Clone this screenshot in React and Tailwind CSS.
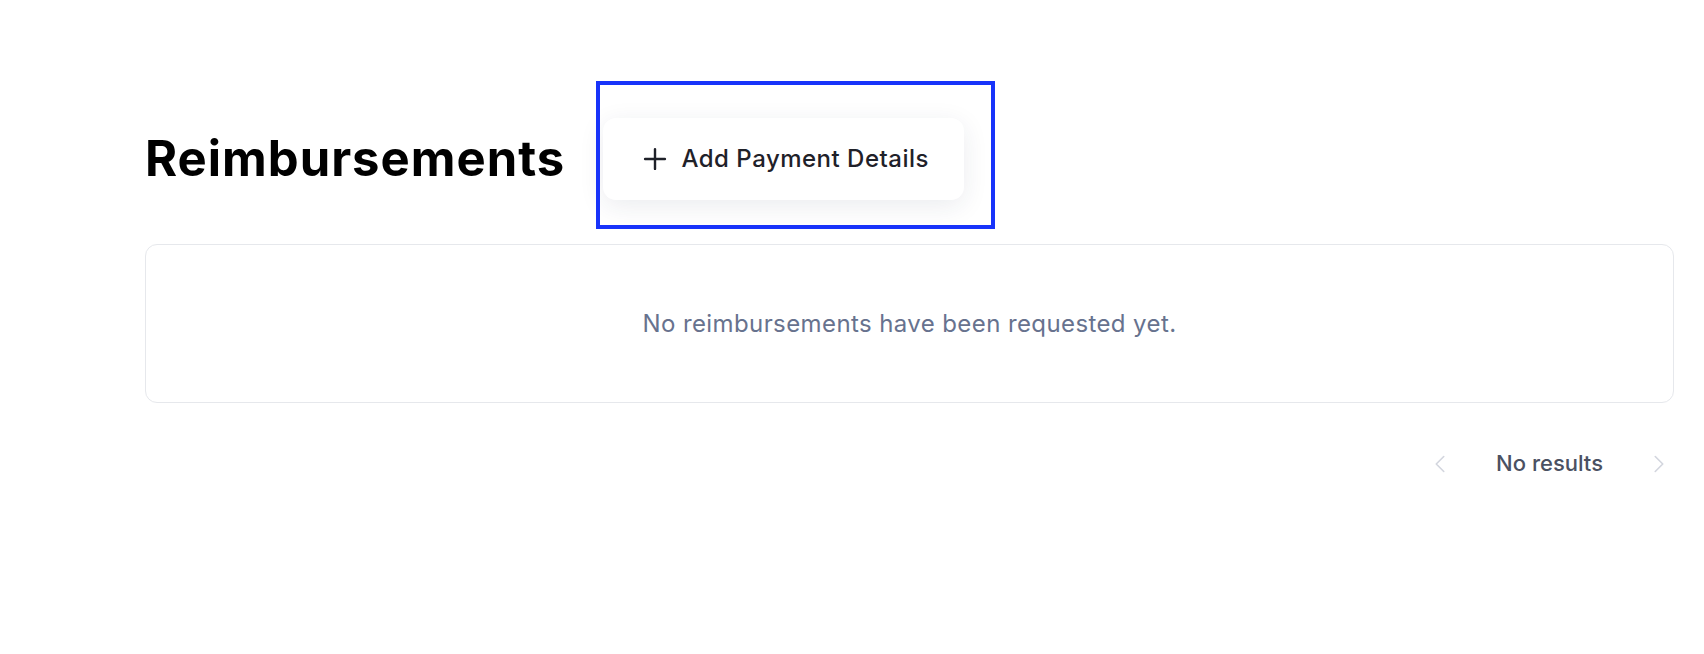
import { Plus, ChevronLeft, ChevronRight } from 'lucide-react';

const font = { fontFamily: 'Inter, "Noto Sans", sans-serif' };

const Pagination = () => (
  <div className="flex items-center justify-end gap-[41px] mt-[44px]">
    <button className="w-[30px] h-[30px] flex items-center justify-center text-[#d3d6de]" disabled>
      <ChevronLeft size={30} strokeWidth={1.3} />
    </button>
    <span className="text-[22px] font-medium text-[#4b5162]">No results</span>
    <button className="w-[30px] h-[30px] flex items-center justify-center text-[#d3d6de]" disabled>
      <ChevronRight size={30} strokeWidth={1.3} />
    </button>
  </div>
);

export default function App() {
  return (
    <div className="relative min-h-screen bg-white pl-[145px] pr-[30px] pt-[118px]" style={font}>
      {/* Header */}
      <div className="flex items-center gap-[38px] h-[82px]">
        <h1 className="text-[49px] font-bold text-black tracking-[1px]">Reimbursements</h1>
        <button className="h-[82px] w-[361px] flex items-center justify-center gap-[9px] rounded-[13px] bg-white shadow-[0_6px_26px_rgba(30,41,80,0.09)] text-[#1f2129]">
          <Plus size={34} strokeWidth={1.7} />
          <span className="text-[24px] font-medium tracking-[0.5px]">Add Payment Details</span>
        </button>
      </div>

      {/* highlight overlay */}
      <div className="absolute left-[596px] top-[81px] w-[399px] h-[148px] border-4 border-[#1833fa] pointer-events-none" />

      {/* Table */}
      <div className="mt-[44px] h-[159px] rounded-xl border border-[#e6e8ec] flex items-center justify-center">
        <p className="text-[24px] tracking-[0.4px] text-[#67728e]">No reimbursements have been requested yet.</p>
      </div>

      <Pagination />
    </div>
  );
}
